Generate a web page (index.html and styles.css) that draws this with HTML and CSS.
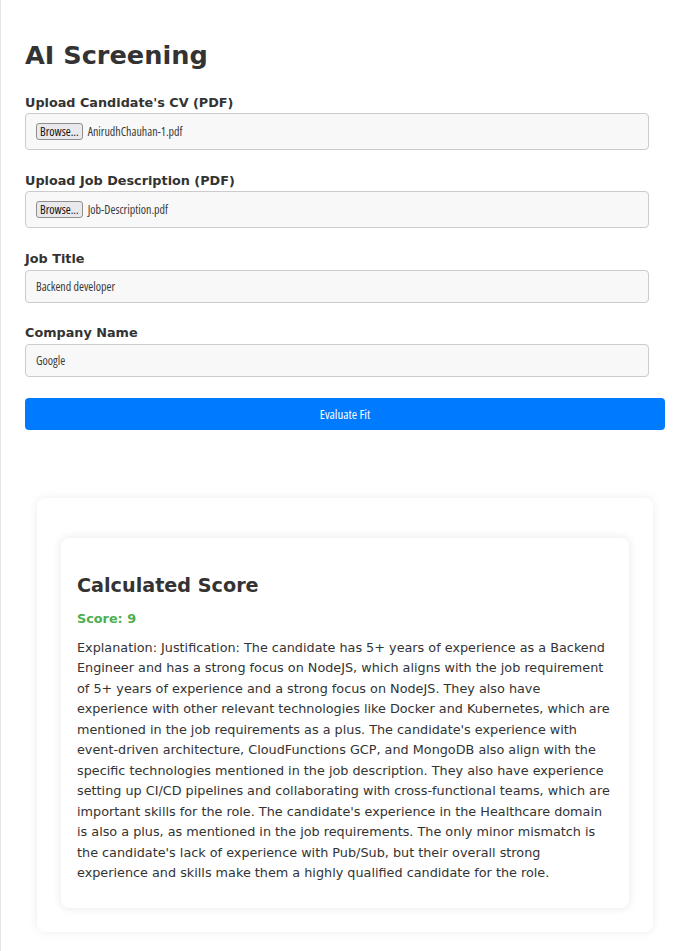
FILE: index.html
```html
<!DOCTYPE html>
<html>
<head>
<meta charset="utf-8">
<link rel="stylesheet" href="styles.css">
</head>
<body>
<div class="page">
  <h1 class="title">AI Screening</h1>
  <form class="form">
    <div class="field">
      <label class="label">Upload Candidate's CV (PDF)</label>
      <div class="input file-input"><span class="browse">Browse...</span><span class="file-name">AnirudhChauhan-1.pdf</span></div>
    </div>
    <div class="field">
      <label class="label">Upload Job Description (PDF)</label>
      <div class="input file-input"><span class="browse">Browse...</span><span class="file-name">Job-Description.pdf</span></div>
    </div>
    <div class="field">
      <label class="label">Job Title</label>
      <div class="input text-input">Backend developer</div>
    </div>
    <div class="field">
      <label class="label">Company Name</label>
      <div class="input text-input">Google</div>
    </div>
    <div class="submit">Evaluate Fit</div>
  </form>
  <div class="result">
    <div class="score-card">
      <h2 class="score-title">Calculated Score</h2>
      <p class="score">Score: 9</p>
      <p class="explanation">Explanation: Justification: The candidate has 5+ years of experience as a Backend Engineer and has a strong focus on NodeJS, which aligns with the job requirement of 5+ years of experience and a strong focus on NodeJS. They also have experience with other relevant technologies like Docker and Kubernetes, which are mentioned in the job requirements as a plus. The candidate's experience with event-driven architecture, CloudFunctions GCP, and MongoDB also align with the specific technologies mentioned in the job description. They also have experience setting up CI/CD pipelines and collaborating with cross-functional teams, which are important skills for the role. The candidate's experience in the Healthcare domain is also a plus, as mentioned in the job requirements. The only minor mismatch is the candidate's lack of experience with Pub/Sub, but their overall strong experience and skills make them a highly qualified candidate for the role.</p>
    </div>
  </div>
</div>
</body>
</html>
```
FILE: styles.css
```css
html, body {
  margin: 0;
  padding: 0;
  background: #fff;
}
body {
  font-family: "DejaVu Sans", sans-serif;
  color: #333;
}
.page {
  border-left: 1px solid #e6e6e6;
  padding: 40px 15px 20px 24px;
  min-height: 951px;
  box-sizing: border-box;
}
.title {
  margin: 0 0 23px 0;
  font-size: 25.6px;
  line-height: 30px;
  font-weight: bold;
  color: #333;
}
.form {
  display: flex;
  flex-direction: column;
}
.field {
  display: flex;
  flex-direction: column;
  margin-bottom: 21.3px;
}
.label {
  font-size: 12.8px;
  line-height: 15px;
  font-weight: bold;
  color: #333;
  padding-top: 1.5px;
  margin-bottom: 3.5px;
}
.input {
  width: 624px;
  box-sizing: border-box;
  background: #f8f8f8;
  border: 1px solid #cccccc;
  border-radius: 4px;
  font-family: "Open Sans", sans-serif;
  font-stretch: 75%;
  font-size: 12px;
  color: #3a3a3a;
  display: flex;
  align-items: center;
  padding: 0 10px;
}
.file-input {
  height: 37px;
}
.text-input {
  height: 33px;
}
.browse {
  border: 1px solid #8f8f8f;
  border-radius: 3px;
  background: #e9e9ed;
  color: #111;
  padding: 1px 3px;
  line-height: 13px;
  margin-right: 5px;
}
.submit {
  height: 32px;
  width: 640px;
  background: #007bff;
  border-radius: 4px;
  color: #fff;
  font-family: "Open Sans", sans-serif;
  font-stretch: 75%;
  font-size: 12.8px;
  display: flex;
  align-items: center;
  justify-content: center;
}
.result {
  margin: 68px 12px 0 12px;
  padding: 40px 24px 24px 24px;
  background: #fff;
  border-radius: 8px;
  box-shadow: 0 0 10px rgba(0, 0, 0, 0.08);
}
.score-card {
  background: #fff;
  border-radius: 8px;
  box-shadow: 0 0 10px rgba(0, 0, 0, 0.1);
  padding: 36px 16px 24px 16px;
}
.score-title {
  margin: 0 0 13.5px 0;
  font-size: 19.2px;
  line-height: 23px;
  font-weight: bold;
  color: #333;
}
.score {
  margin: 0 0 11px 0;
  font-size: 12.8px;
  line-height: 16px;
  font-weight: bold;
  color: #4caf50;
}
.explanation {
  margin: 0;
  font-size: 12.8px;
  line-height: 20.48px;
  color: #333;
}
```
